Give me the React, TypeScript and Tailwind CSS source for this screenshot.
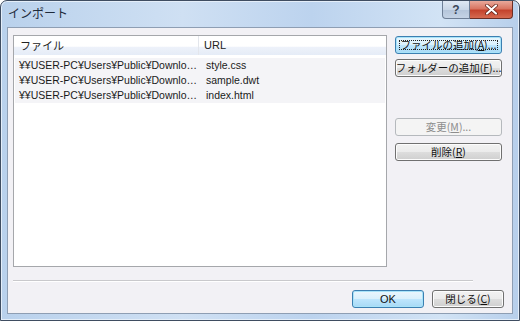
import React from "react";

const jp = { fontFamily: '"Noto Sans CJK JP", sans-serif' };
const lat = { fontFamily: '"Liberation Sans", "Noto Sans CJK JP", sans-serif' };

function Btn({
  children,
  className = "",
  variant = "normal",
}: {
  children: React.ReactNode;
  className?: string;
  variant?: "normal" | "focus" | "default" | "disabled";
}) {
  const base =
    "relative flex h-[18px] items-center justify-center whitespace-nowrap rounded-[3px] border text-[10.5px] leading-none";
  if (variant === "disabled") {
    return (
      <div className={`${base} border-[#b5b9bd] bg-[#f4f4f4] text-[#8d8d8d] ${className}`} style={jp}>
        {children}
      </div>
    );
  }
  if (variant === "focus" || variant === "default") {
    return (
      <div
        className={`${base} border-[#3c7fb1] bg-[linear-gradient(#eaf6fd_0%,#d9f0fc_50%,#bee6fd_51%,#a7d9f5_100%)] text-[#111] shadow-[inset_0_0_0_1px_#a8e3f9] ${className}`}
        style={jp}
      >
        {variant === "focus" && (
          <span className="absolute inset-[3px] border border-dotted border-[#222]" />
        )}
        <span className="relative">{children}</span>
      </div>
    );
  }
  return (
    <div
      className={`${base} border-[#707070] bg-[linear-gradient(#f2f2f2_0%,#ebebeb_50%,#dddddd_51%,#cfcfcf_100%)] text-[#111] shadow-[inset_0_0_0_1px_#fcfcfc] ${className}`}
      style={jp}
    >
      {children}
    </div>
  );
}

const rows = [
  ["\u00A5\u00A5USER-PC\u00A5Users\u00A5Public\u00A5Downlo…", "style.css"],
  ["\u00A5\u00A5USER-PC\u00A5Users\u00A5Public\u00A5Downlo…", "sample.dwt"],
  ["\u00A5\u00A5USER-PC\u00A5Users\u00A5Public\u00A5Downlo…", "index.html"],
];

export default function App() {
  return (
    <div className="h-[321px] w-[520px] overflow-hidden bg-white">
      <div className="flex h-[321px] w-[520px] flex-col rounded-t-[7px] border border-[#3f4d61] bg-[linear-gradient(90deg,#b9d1ec_0%,#cfe0f3_35%,#bcd3ee_60%,#d2e3f5_85%,#b7cfeb_100%)] shadow-[inset_0_0_0_1px_#e4eef9]">
        {/* title bar */}
        <div className="flex h-[26px] shrink-0 items-start">
          <div className="pl-[7px] pt-[5px] text-[12px] leading-[14px] text-[#1e2a3a]" style={jp}>
            インポート
          </div>
          <div className="flex-1" />
          <div className="mr-[6px] flex h-[18px]">
            <div className="flex h-[18px] w-[28px] items-center justify-center rounded-bl-[4px] border border-t-0 border-[#6e7f96] bg-[linear-gradient(#dfe8f3_0%,#c9d6e6_50%,#b4c5da_51%,#c4d3e5_100%)] text-[12px] font-bold text-[#3a4658]" style={lat}>
              ?
            </div>
            <div className="flex h-[18px] w-[43px] items-center justify-center rounded-br-[4px] border border-l-0 border-t-0 border-[#6b2e25] bg-[linear-gradient(#e9a99b_0%,#d97561_45%,#c4432d_55%,#d66a50_100%)]">
              <svg width="13" height="11" viewBox="0 0 13 11">
                <path d="M2 1.5 L11 9.5 M11 1.5 L2 9.5" stroke="#5a1a10" strokeWidth="3.6" strokeLinecap="round" />
                <path d="M2 1.5 L11 9.5 M11 1.5 L2 9.5" stroke="#ffffff" strokeWidth="2.2" strokeLinecap="round" />
              </svg>
            </div>
          </div>
        </div>

        {/* client */}
        <div className="mx-[6px] mb-[6px] flex flex-1 flex-col border border-[#8e9eb3] bg-[#f2f1f5]">
          <div className="flex pl-[5px] pr-[8px] pt-[7px]">
            {/* list view */}
            <div className="flex h-[232px] w-[374px] flex-col border border-[#a5a7ab] bg-white" style={lat}>
              <div className="flex h-[19px] bg-[linear-gradient(#ffffff_0%,#ffffff_55%,#eef2fa_56%,#e5ecf7_100%)]">
                <div className="flex w-[185px] items-center border-r border-[#e3e6ec] pl-[6px] text-[11px] text-[#222]" style={jp}>
                  ファイル
                </div>
                <div className="flex items-center pl-[5px] text-[11px] text-[#222]">URL</div>
              </div>
              <div className="mt-[3px] flex flex-col px-[1px]">
                {rows.map((r, i) => (
                  <div key={i} className="flex h-[15px] items-center bg-[#f4f4f7] text-[10.5px] leading-none text-[#1a1a1a]">
                    <div className="w-[185px] shrink-0 overflow-hidden whitespace-nowrap pl-[4px]">{r[0]}</div>
                    <div className="pl-[6px]">{r[1]}</div>
                  </div>
                ))}
              </div>
            </div>
            {/* right buttons */}
            <div className="ml-[8px] flex w-[107px] flex-col">
              <Btn variant="focus" className="mt-[1px]">
                ファイルの追加(<span className="underline">A</span>)...
              </Btn>
              <Btn className="mt-[5px]">
                フォルダーの追加(<span className="underline">F</span>)...
              </Btn>
              <Btn variant="disabled" className="mt-[41px]">
                変更(<span className="underline">M</span>)...
              </Btn>
              <Btn className="mt-[7px]">
                削除(<span className="underline">R</span>)
              </Btn>
            </div>
          </div>
          <div className="ml-[5px] mt-[13px] h-[1px] w-[460px] bg-[#c9c9cc] shadow-[0_1px_0_#ffffff]" />
          <div className="mt-[9px] flex justify-end gap-[8px] pr-[8px]">
            <Btn variant="default" className="w-[72px]">
              <span style={lat} className="text-[11px]">OK</span>
            </Btn>
            <Btn className="w-[72px]">
              閉じる(<span className="underline">C</span>)
            </Btn>
          </div>
        </div>
      </div>
    </div>
  );
}
